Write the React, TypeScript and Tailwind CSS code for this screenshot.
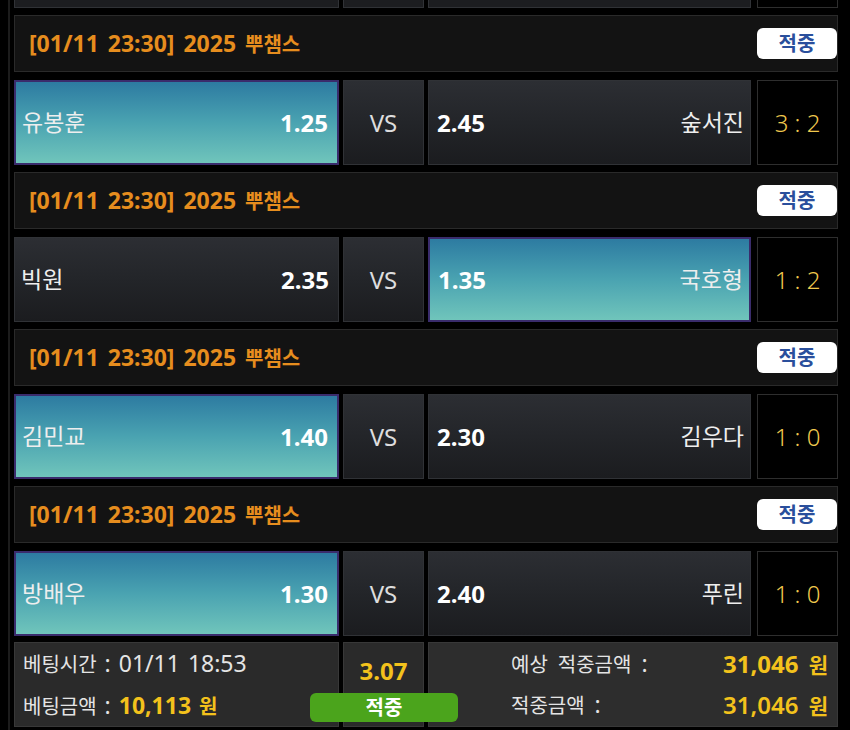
import React from "react";

type Match = {
  home: string;
  homeOdds: string;
  away: string;
  awayOdds: string;
  score: string;
  pick: "home" | "away";
};

const matches: Match[] = [
  { home: "유봉훈", homeOdds: "1.25", away: "숲서진", awayOdds: "2.45", score: "3 : 2", pick: "home" },
  { home: "빅원", homeOdds: "2.35", away: "국호형", awayOdds: "1.35", score: "1 : 2", pick: "away" },
  { home: "김민교", homeOdds: "1.40", away: "김우다", awayOdds: "2.30", score: "1 : 0", pick: "home" },
  { home: "방배우", homeOdds: "1.30", away: "푸린", awayOdds: "2.40", score: "1 : 0", pick: "home" },
];

// latin glyphs in the original font run larger than the hangul ones
function Mixed({ text, latin }: { text: string; latin: string }) {
  const parts = text.split(/([\uAC00-\uD7A3]+)/).filter((p) => p !== "");
  return (
    <>
      {parts.map((p, i) =>
        /[\uAC00-\uD7A3]/.test(p) ? (
          <span key={i}>{p}</span>
        ) : (
          <span key={i} className={latin}>
            {p}
          </span>
        )
      )}
    </>
  );
}

const cellBase = "flex items-center h-full";
const darkCell = "border border-[#303236] bg-gradient-to-b from-[#2c2e33] via-[#232529] to-[#1b1c1f]";
const pickedCell = "border-2 border-[#3a2c6c] bg-gradient-to-b from-[#2d7ba1] via-[#4aa3b1] to-[#70c5bb]";

function MatchRow({ m }: { m: Match }) {
  return (
    <div className="flex h-[85px] shrink-0">
      <div className={`${cellBase} w-[325px] justify-between pl-[6px] pr-[9px] ${m.pick === "home" ? pickedCell : darkCell}`}>
        <span className="text-[23px] text-[#eeeeee]">{m.home}</span>
        <span className="text-[24px] font-bold text-white">{m.homeOdds}</span>
      </div>
      <div className={`${cellBase} ml-[4px] w-[81px] justify-center ${darkCell}`}>
        <span className="text-[24px] text-[#dddddd]">VS</span>
      </div>
      <div className={`${cellBase} ml-[4px] w-[323px] justify-between pl-[8px] pr-[6px] ${m.pick === "away" ? pickedCell : darkCell}`}>
        <span className="text-[24px] font-bold text-white">{m.awayOdds}</span>
        <span className="text-[23px] text-[#eeeeee]">{m.away}</span>
      </div>
      <div className={`${cellBase} ml-[6px] w-[81px] justify-center border border-[#2e2e2e] bg-black`}>
        <span className="text-[24px] font-light text-[#f0c94e]">{m.score}</span>
      </div>
    </div>
  );
}

function Header() {
  return (
    <div className="flex h-[57px] shrink-0 items-center justify-between border border-[#2a2a2a] bg-[#131313] pl-[14px]">
      <span className="text-[20px] font-bold text-[#e68d1e] [word-spacing:3px]">
        <Mixed text="[01/11 23:30] 2025 뿌챔스" latin="text-[23px]" />
      </span>
      <span className="flex h-[31px] w-[80px] items-center justify-center rounded-[6px] bg-white text-[20px] font-bold text-[#2a4f9c]">
        적중
      </span>
    </div>
  );
}

export default function App() {
  return (
    <div className="h-[730px] w-[850px] overflow-hidden bg-black pl-[8px] font-['Noto_Sans','Noto_Sans_CJK_KR',sans-serif]">
      <div className="flex h-full w-[830px] flex-col gap-[7px] border-l-2 border-[#1c1c1c] pl-[4px]">
        {/* tail of the previous row */}
        <div className="flex h-[8px] shrink-0">
          <div className="w-[325px] border border-t-0 border-[#303236] bg-[#1c1d20]" />
          <div className="ml-[4px] w-[81px] border border-t-0 border-[#303236] bg-[#1c1d20]" />
          <div className="ml-[4px] w-[323px] border border-t-0 border-[#303236] bg-[#1c1d20]" />
          <div className="ml-[6px] w-[81px] border border-t-0 border-[#2e2e2e] bg-black" />
        </div>

        {matches.map((m, i) => (
          <div key={i} className="flex flex-col gap-[8px]">
            <Header />
            <MatchRow m={m} />
          </div>
        ))}

        {/* summary */}
        <div className="relative -mt-[1px] flex h-[85px] shrink-0">
          <div className="flex w-[325px] flex-col justify-center border border-[#383838] bg-[#2a2a2a] pl-[8px] text-[20px] leading-[41px] text-[#e4e4e4] [word-spacing:2px]">
            <div>
              <Mixed text="베팅시간 : 01/11 18:53" latin="text-[23px]" />
            </div>
            <div>
              <Mixed text="베팅금액 : " latin="text-[23px]" />
              <span className="font-bold text-[#f3c21c]">
                <Mixed text="10,113 원" latin="text-[23px]" />
              </span>
            </div>
          </div>
          <div className="ml-[4px] flex w-[81px] justify-center border border-[#383838] bg-[#2a2a2a] pt-[10px]">
            <span className="text-[24px] font-bold leading-[36px] text-[#f3c21c]">3.07</span>
          </div>
          <div className="ml-[4px] flex w-[410px] flex-col justify-center border border-[#383838] bg-[#2d2d2d] pl-[82px] pr-[9px] text-[20px] leading-[39px] text-[#e4e4e4] [word-spacing:4px]">
            <div className="flex justify-between">
              <span>
                <Mixed text="예상 적중금액 :" latin="text-[23px]" />
              </span>
              <span className="text-[21px] font-bold text-[#f3c21c]">
                <Mixed text="31,046 원" latin="text-[24px]" />
              </span>
            </div>
            <div className="flex justify-between">
              <span>
                <Mixed text="적중금액 :" latin="text-[23px]" />
              </span>
              <span className="text-[21px] font-semibold text-[#f3c21c]">
                <Mixed text="31,046 원" latin="text-[24px]" />
              </span>
            </div>
          </div>
          <div className="absolute left-[296px] top-[51px] flex h-[29px] w-[148px] items-center justify-center rounded-[6px] bg-[#4ba41c] text-[20px] font-bold text-white">
            적중
          </div>
        </div>
      </div>
    </div>
  );
}
